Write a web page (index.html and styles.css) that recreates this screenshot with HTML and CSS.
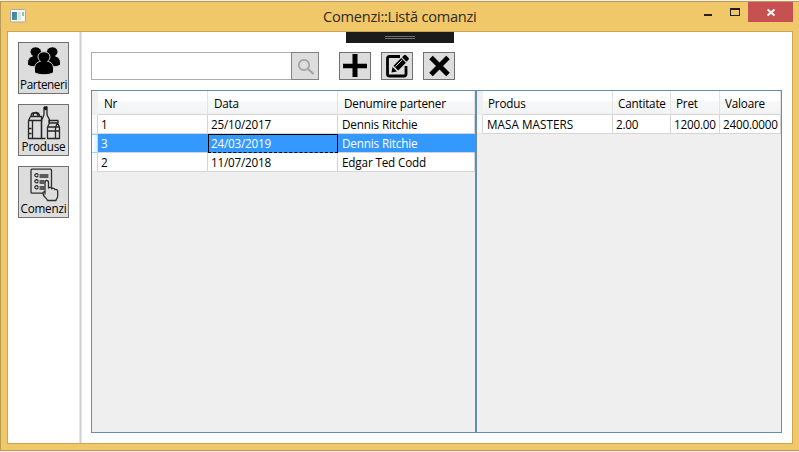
FILE: index.html
```html
<!DOCTYPE html>
<html lang="ro">
<head>
<meta charset="utf-8">
<title>Comenzi::Listă comanzi</title>
<link rel="stylesheet" href="styles.css">
</head>
<body>
<div class="window">
  <header class="titlebar">
    <svg class="app-icon" width="16" height="14" viewBox="0 0 16 14">
      <defs><linearGradient id="pane" x1="0" y1="0" x2="1" y2="1"><stop offset="0" stop-color="#4a74b0"/><stop offset="1" stop-color="#48a878"/></linearGradient></defs>
      <rect x=".5" y=".5" width="15" height="12.500" rx="1" fill="#f7f8fa" stroke="#a9a9a5"/>
      <rect x="2" y="3" width="5" height="8" fill="url(#pane)"/>
      <rect x="8" y="3" width="3" height="8" fill="#dfe2e5"/>
      <rect x="12" y="3" width="2" height="4" fill="#8dc5ae"/>
    </svg>
    <h1 class="title">Comenzi::Listă comanzi</h1>
    <div class="controls">
      <svg width="60" height="20" viewBox="0 0 60 20"><path d="M16 12h8v2h-8z" fill="#222"/><path d="M42 6h10v8h-10zM43 8v5h8v-5z" fill="#222" fill-rule="evenodd"/></svg>
      <button class="close"><svg width="45" height="20" viewBox="0 0 45 20"><path d="M19.500 7.500l7 6M26.500 7.500l-7 6" stroke="#fff" stroke-width="1.900"/></svg></button>
    </div>
  </header>
  <div class="client">
    <div class="debug-bar"><i></i></div>
    <nav class="sidebar">
      <button class="nav">
        <svg width="34" height="30" viewBox="0 0 34 30">
          <g fill="#000" stroke="#dddddd" stroke-width="1">
            <path d="M.5 18v-2c0-4 2-6 5-7-1.500-1-2.500-2.500-2.500-4.200C3 2 5.500-.2 8.700-.2s5.800 2.200 5.800 5c0 1.700-1 3.200-2.500 4.200 3 1 5 3.500 5 7v2c-4 2.500-12.500 2.500-16.500 0z"/>
            <path d="M33.500 18v-2c0-4-2-6-5-7 1.500-1 2.500-2.500 2.500-4.200 0-2.800-2.500-5-5.700-5s-5.800 2.200-5.800 5c0 1.700 1 3.200 2.500 4.200-3 1-5 3.500-5 7v2c4 2.500 12.500 2.500 16.500 0z"/>
            <path d="M7.500 25.500v-4c0-4 2.500-6.500 6-7.200-1.500-1-2.500-2.700-2.500-4.500 0-2.800 2.500-5 6-5s6 2.200 6 5c0 1.800-1 3.500-2.500 4.500 3.500.7 6 3.200 6 7.200v4c-4.500 3-14.500 3-19 0z"/>
          </g>
        </svg>
        <span>Parteneri</span>
      </button>
      <button class="nav">
        <svg width="34" height="34" viewBox="0 0 34 34">
          <g fill="none" stroke="#262626" stroke-width="1.300" stroke-linejoin="round">
            <path d="M1.500 14.500h4v18h-4zM5.500 14.500h9v18h-9M1.500 14.500l2-4h11v22M4 10.500c0-5 7-5 7 0M6 10.500c0-6 6.500-5 6.500 0M1.500 22.500h3M1.500 27.500h3"/>
            <path d="M17 1h3v7c0 3 2.500 3.500 2.500 7M17 1v7c0 3-2.500 4-2.500 8v16.500M17 3.500h3M22.500 15v1M14.500 32.500h4"/>
            <path d="M20.500 21h12v11.500h-12zM20.500 21l2-4h8l2 4M22 14.500h9v2.500h-9zM20.500 25h12M28.500 21v11.500M28.500 21l2-4"/>
          </g>
          <path d="M17 1h3v2h-3z" fill="#111"/>
        </svg>
        <span>Produse</span>
      </button>
      <button class="nav">
        <svg width="34" height="34" viewBox="0 0 34 34">
          <g fill="none" stroke="#303030" stroke-width="1.300" stroke-linecap="round" stroke-linejoin="round">
            <rect x="4" y="1.200" width="20.500" height="24" rx="1"/>
            <path d="M11 6.500c-1-1.500-3.500-.5-3.200 1 .3 1.800 3 1.500 3.200.3M13 7h8M13 9h8M11 12.500c-1-1.500-3.500-.5-3.200 1 .3 1.800 3 1.500 3.200.3M13 13h4M13 15h4M11 18.500c-1-1.500-3.500-.5-3.200 1 .3 1.800 3 1.500 3.200.3M13 19h4M13 21h4"/>
            <path fill="#ddd" d="M18 26V14.500c0-2.700 3.500-2.700 3.500 0V20c1-1 3-.8 3.200.8 1-1 3-.6 3.200.9 1.200-.8 2.800 0 2.800 1.500V28c0 2.500-1.700 3-1.700 4.500h-8.500c0-2-5-4-4.500-7.500.2-1.400 1.500-1.500 2-.5"/>
          </g>
        </svg>
        <span>Comenzi</span>
      </button>
    </nav>
    <main class="content">
      <div class="toolbar">
        <input class="search" type="text" aria-label="search">
        <button class="tool find"><svg width="26" height="26" viewBox="0 0 26 26"><g fill="none" stroke="#a3a3a3"><circle cx="12" cy="12" r="5.200" stroke-width="1.700"/><path d="M16 16l5.500 5" stroke-width="2.200"/></g></svg></button>
        <button class="tool add"><svg width="30" height="26" viewBox="0 0 30 26"><path d="M12.500 1h5v9.700H27v4.600h-9.500V24h-5v-8.700H3v-4.600h9.500z"/></svg></button>
        <button class="tool"><svg width="30" height="26" viewBox="0 0 30 26"><path d="M18 3.500H7.500q-2 0-2 2V21q0 2 2 2H22q2 0 2-2V13" fill="none" stroke="#000" stroke-width="2.800"/><path d="M9.500 19.500l1-5.500 4.500 4.500zM11.500 12.700l7.700-7.700 4.700 4.700-7.700 7.700zM20 4.200l2-2q1-.8 2 0l2.500 2.500q.8 1 0 2l-2 2z"/><path d="M13.500 13.500l6.500-6.500" stroke="#ddd"/></svg></button>
        <button class="tool"><svg width="30" height="26" viewBox="0 0 30 26"><path d="M7 4.500l17 17M24 4.500l-17 17" stroke="#000" stroke-width="5"/></svg></button>
      </div>
      <div class="grids">
        <section class="grid orders">
          <div class="row head"><i></i><b>Nr</b><b>Data</b><b>Denumire partener</b></div>
          <div class="row"><i></i><span>1</span><span>25/10/2017</span><span class="name">Dennis Ritchie</span></div>
          <div class="row selected"><i></i><span>3</span><span class="focus">24/03/2019</span><span class="name">Dennis Ritchie</span></div>
          <div class="row"><i></i><span>2</span><span>11/07/2018</span><span class="name">Edgar Ted Codd</span></div>
        </section>
        <section class="grid lines">
          <div class="row head"><i></i><b>Produs</b><b>Cantitate</b><b>Pret</b><b>Valoare</b></div>
          <div class="row"><i></i><span class="caps">MASA MASTERS</span><span>2.00</span><span>1200.00</span><span>2400.0000</span></div>
        </section>
      </div>
    </main>
  </div>
</div>
</body>
</html>
```
FILE: styles.css
```css
* { box-sizing: border-box; }
body {
  margin: 0;
  padding-top: 1px;
  height: 452px;
  overflow: hidden;
  background: #f3efec;
  font: 11.7px/18px "Open Sans", "Noto Sans", sans-serif;
  color: #000;
}
button { padding: 0; font: inherit; color: inherit; }
svg { display: block; flex: none; }
.window {
  width: 799px;
  height: 450px;
  padding: 0 6px 7px;
  background: #f0c869;
  border: 1px solid #b99b54;
  border-right: 0;
}
.titlebar { display: flex; height: 29px; align-items: flex-start; }
.app-icon { margin: 7px 0 0 3px; }
.title {
  flex: 1;
  margin: 0;
  padding: 3px 0 0 297px;
  font-size: 14.6px;
  font-weight: 400;
  line-height: 22px;
  letter-spacing: -0.25px;
  color: #2f2a20;
  white-space: nowrap;
}
.controls { display: flex; }
.close { width: 45px; height: 20px; border: 0; background: #c75050; }
.client {
  position: relative;
  display: flex;
  width: 786px;
  height: 413px;
  border: 1px solid #caa653;
  background: #fff;
}
.debug-bar {
  position: absolute;
  left: 338px;
  top: 0;
  width: 108px;
  height: 11px;
  background: #1b1b1b;
}
.debug-bar i {
  display: block;
  width: 30px;
  height: 3px;
  margin: 4px 0 0 39px;
  border: solid #707070;
  border-width: 1px 0;
}
.sidebar {
  display: flex;
  flex-direction: column;
  gap: 10px;
  width: 74px;
  padding: 10px;
  background: linear-gradient(90deg, #e6e6e6 1px, #cfcfcf 1px 2px, #e6e6e6 2px) right / 3px 100% no-repeat;
}
.nav {
  display: flex;
  flex-direction: column;
  align-items: center;
  width: 51px;
  height: 52px;
  background: #ddd;
  border: 1px solid #707070;
  overflow: hidden;
}
.nav svg { margin-top: 1px; }
.nav:first-child svg { margin: 4px 0 1px; }
.nav span { height: 15px; line-height: 15px; margin-top: -1px; white-space: nowrap; letter-spacing: -0.2px; }
.nav:first-child span { letter-spacing: -0.4px; }
.content { width: 710px; padding: 20px 10px 10px 9px; }
.toolbar { display: flex; height: 28px; }
.search { width: 200px; height: 28px; padding: 0 4px; border: 1px solid #abadb3; border-right: 0; background: #fff; }
.tool { width: 32px; height: 28px; margin-right: 10px; background: #ddd; border: 1px solid #707070; }
.find { width: 28px; margin-right: 20px; border-color: #838383; }
.grids { display: flex; height: 343px; margin-top: 10px; }
.grid { border: 1px solid #688caf; background: #efefef; }
.orders { width: 385px; }
.lines { width: 306px; }
.row { display: grid; height: 19px; }
.orders .row { grid-template-columns: 6px 110px 130px 137px; }
.lines .row { grid-template-columns: 6px 130px 58px 49px 61px; }
.row span, .row i, .row b { border: solid #d5d5d5; border-width: 0 1px 1px 0; white-space: nowrap; overflow: hidden; }
.row span { padding-left: 3px; background: #fff; letter-spacing: -0.2px; }
.row .name { padding-left: 4px; letter-spacing: -0.15px; }
.row .caps { padding-left: 4px; letter-spacing: 0.05px; }
.row i { background: #fafafa; border-bottom-color: #e8e8e8; }
.row.head { height: 24px; }
.head b {
  padding-left: 6px;
  font-weight: 400;
  line-height: 25px;
  letter-spacing: -0.2px;
  background: linear-gradient(#fff 0 45%, #f7f8fa 45%, #f2f3f5);
  border-right-color: #e4e4e4;
}
.lines .head b { padding-left: 5px; }
.head i { background: #f0f0f0; border-color: #f0f0f0; }
.row.selected span { background: #3399ff; color: #fff; border-right-color: #3399ff; }
.row.selected i { background: linear-gradient(90deg, #fff, #e0f2fb); border-top: 1px solid #8fd6f5; border-bottom-color: #8fd6f5; }
.row.selected .focus { border: 1px solid #000; border-bottom-style: dashed; padding-left: 2px; line-height: 17px; }
```
